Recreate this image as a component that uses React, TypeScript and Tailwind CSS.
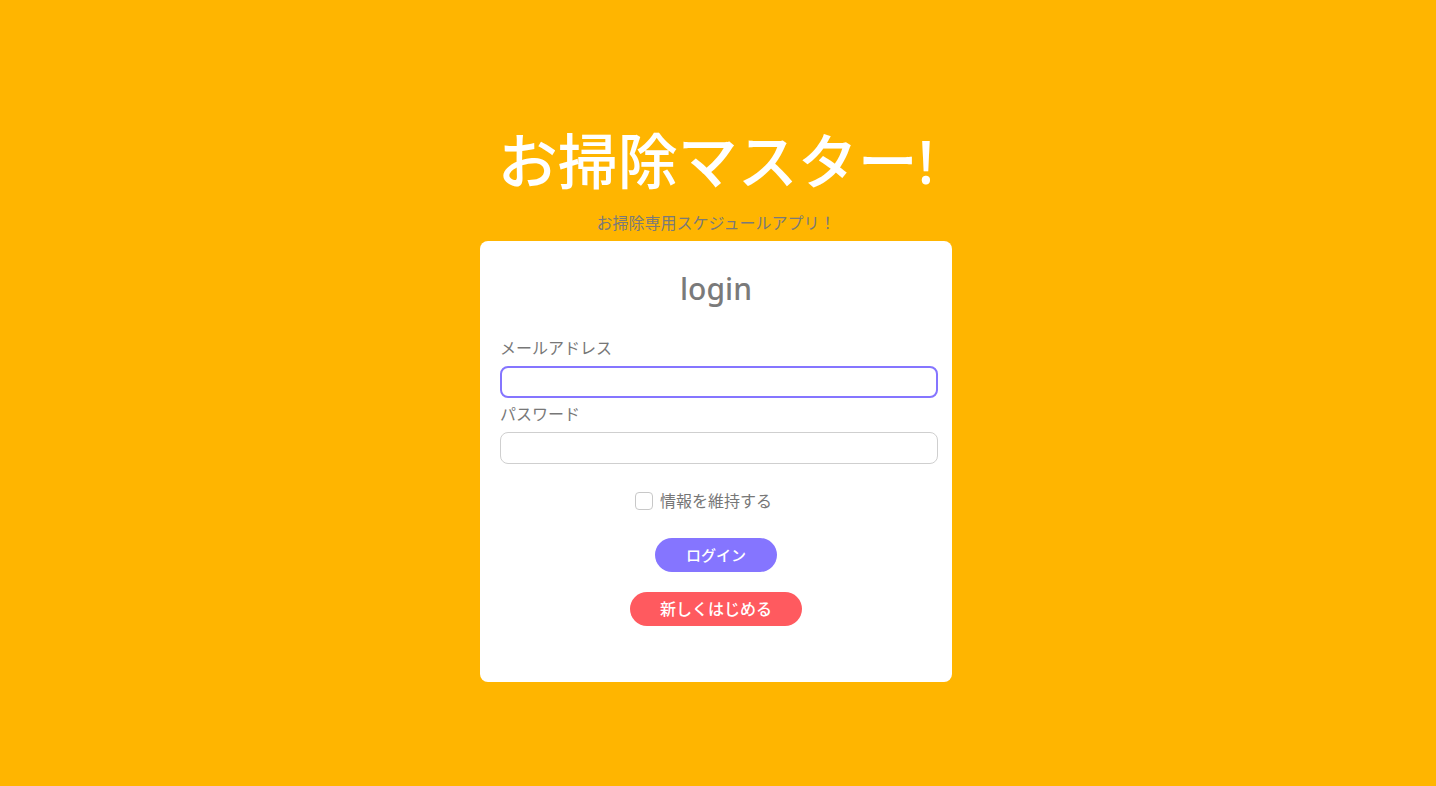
export default function App() {
  return (
    <div
      className="min-h-[786px] w-full bg-[#ffb500] flex flex-col items-center pt-[127px]"
      style={{ fontFamily: '"Noto Sans", "Noto Sans CJK JP", sans-serif' }}
    >
      <h1 className="mr-[4px] text-[60px] leading-[68px] font-medium text-white">
        お掃除マスター!
      </h1>
      <p className="mr-[4px] mt-[16px] text-[16px] leading-[24px] text-[#7a7a7a]">
        お掃除専用スケジュールアプリ！
      </p>
      <div className="mr-[4px] mt-[6px] w-[472px] bg-white rounded-[8px] px-[20px] pt-[28px] pb-[56px] flex flex-col">
        <h2 className="text-center text-[30px] leading-[40px] font-medium text-[#7a7a7a]">login</h2>
        <label className="mt-[27px] text-[16px] leading-[24px] text-[#777]">メールアドレス</label>
        <input
          type="email"
          className="mt-[6px] w-[438px] h-[32px] rounded-[8px] border-2 border-[#8575ff] outline-none px-2"
        />
        <label className="mt-[4px] text-[16px] leading-[24px] text-[#777]">パスワード</label>
        <input
          type="password"
          className="mt-[6px] w-[438px] h-[32px] rounded-[8px] border border-[#cfcfcf] outline-none px-2"
        />
        <div className="mt-[25px] mr-[25px] flex items-center justify-center gap-[7px]">
          <span className="w-[18px] h-[18px] rounded-[4px] border border-[#c8c8c8] bg-white" />
          <span className="text-[16px] leading-[24px] text-[#777]">情報を維持する</span>
        </div>
        <div className="mt-[25px] flex justify-center">
          <button className="w-[122px] h-[34px] rounded-full bg-[#8575ff] text-white text-[15px] font-medium">
            ログイン
          </button>
        </div>
        <div className="mt-[20px] flex justify-center">
          <button className="w-[172px] h-[34px] rounded-full bg-[#ff5a5f] text-white text-[16px] font-medium">
            新しくはじめる
          </button>
        </div>
      </div>
    </div>
  );
}
